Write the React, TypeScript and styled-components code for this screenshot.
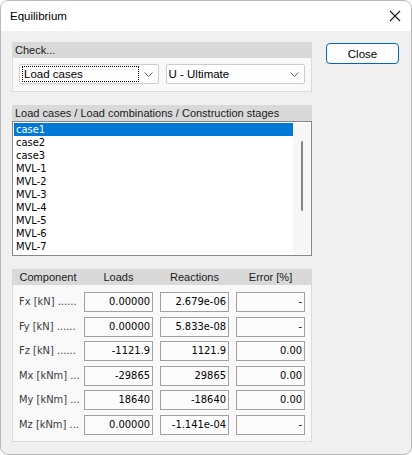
import React from "react";
import styled, {createGlobalStyle} from "styled-components";

const GlobalStyle = createGlobalStyle`
  html, body {
    margin: 0;
    padding: 0;
    background: #ffffff;
  }
  * {
    box-sizing: border-box;
  }
`;

const components = [
    {label: "Fx [kN] ......", loads: "0.00000", reactions: "2.679e-06", error: "-"},
    {label: "Fy [kN] ......", loads: "0.00000", reactions: "5.833e-08", error: "-"},
    {label: "Fz [kN] ......", loads: "-1121.9", reactions: "1121.9", error: "0.00"},
    {label: "Mx [kNm] ...", loads: "-29865", reactions: "29865", error: "0.00"},
    {label: "My [kNm] ...", loads: "18640", reactions: "-18640", error: "0.00"},
    {label: "Mz [kNm] ...", loads: "0.00000", reactions: "-1.141e-04", error: "-"},
];

const loadCases = ["case1", "case2", "case3", "MVL-1", "MVL-2", "MVL-3", "MVL-4", "MVL-5", "MVL-6", "MVL-7"];

const Chevron = () => (
    <svg width="9" height="5" viewBox="0 0 9 5">
        <path d="M0.5 0.5 L4.5 4.5 L8.5 0.5" fill="none" stroke="#606060" strokeWidth="1" />
    </svg>
);

const App = () => {
    return (
        <>
            <GlobalStyle />
            <Window>
                <TitleBar>
                    <Title>Equilibrium</Title>
                    <svg width="12" height="12" viewBox="0 0 12 12">
                        <path d="M1 1 L11 11 M11 1 L1 11" stroke="#1a1a1a" strokeWidth="1.1" />
                    </svg>
                </TitleBar>
                <Body>
                    <LeftColumn>
                        <Group>
                            <GroupHeader>Check...</GroupHeader>
                            <GroupContent padding="6px 6px 7px">
                                <ComboRow>
                                    <Combo>
                                        <FocusText>Load cases</FocusText>
                                        <Chevron />
                                    </Combo>
                                    <Combo>
                                        <ComboText>U - Ultimate</ComboText>
                                        <Chevron />
                                    </Combo>
                                </ComboRow>
                            </GroupContent>
                        </Group>

                        <Group>
                            <GroupHeader>Load cases / Load combinations / Construction stages</GroupHeader>
                            <ListBox>
                                <ListItems>
                                    {loadCases.map((item, i) => (
                                        <ListItem key={item} selected={i === 0}>{item}</ListItem>
                                    ))}
                                </ListItems>
                                <ScrollTrack>
                                    <ScrollThumb />
                                </ScrollTrack>
                            </ListBox>
                        </Group>

                        <Group>
                            <TableHeader>
                                <HeaderCell>Component</HeaderCell>
                                <HeaderCell>Loads</HeaderCell>
                                <HeaderCell>Reactions</HeaderCell>
                                <HeaderCell>Error [%]</HeaderCell>
                            </TableHeader>
                            <GroupContent padding="7px 6px 6px">
                                <TableGrid>
                                    {components.map((c) => (
                                        <React.Fragment key={c.label}>
                                            <RowLabel>{c.label}</RowLabel>
                                            <ValueBox>{c.loads}</ValueBox>
                                            <ValueBox>{c.reactions}</ValueBox>
                                            <ValueBox>{c.error}</ValueBox>
                                        </React.Fragment>
                                    ))}
                                </TableGrid>
                            </GroupContent>
                        </Group>
                    </LeftColumn>
                    <RightColumn>
                        <Button>Close</Button>
                    </RightColumn>
                </Body>
            </Window>
        </>
    );
};

export default App;

const uiFont = `"Liberation Sans", Arial, sans-serif`;
const dataFont = `"DejaVu Sans Condensed", "DejaVu Sans", sans-serif`;

const Window = styled.div`
  width: 412px;
  height: 455px;
  border: 1px solid #b9b9b9;
  border-radius: 8px;
  overflow: hidden;
  background: #f0f0f0;
  display: flex;
  flex-direction: column;
`;

const TitleBar = styled.div`
  height: 30px;
  flex: none;
  background: #ffffff;
  display: flex;
  align-items: center;
  justify-content: space-between;
  padding: 0 10px 0 9px;
`;

const Title = styled.div`
  font-family: ${uiFont};
  font-size: 11.5px;
  color: #000;
`;

const Body = styled.div`
  display: flex;
  padding: 11px 12px 0 11px;
  gap: 14px;
`;

const LeftColumn = styled.div`
  width: 300px;
  display: flex;
  flex-direction: column;
  gap: 13px;
`;

const RightColumn = styled.div`
  padding-top: 1px;
`;

const Group = styled.div`
  display: flex;
  flex-direction: column;
`;

const GroupHeader = styled.div`
  height: 16px;
  background: #d9d9d9;
  padding-left: 3px;
  font-family: ${uiFont};
  font-size: 11px;
  line-height: 16px;
  color: #1a1a1a;
  white-space: nowrap;
`;

const GroupContent = styled.div<{padding: string}>`
  background: #f9f9f9;
  border: 1px solid #dcdcdc;
  border-top: none;
  padding: ${(p) => p.padding};
`;

const ComboRow = styled.div`
  display: flex;
  gap: 7px;
`;

const Combo = styled.div`
  width: 140px;
  height: 20px;
  border: 1px solid #cccccc;
  border-radius: 2px;
  background: #fefefe;
  display: flex;
  align-items: center;
  justify-content: space-between;
  padding: 0 5px 0 2px;
`;

const ComboText = styled.span`
  font-family: ${uiFont};
  font-size: 11.5px;
  color: #000;
`;

const FocusText = styled(ComboText)`
  width: 117px;
  height: 16px;
  line-height: 14px;
  border: 1px dotted #000;
  padding-left: 1px;
`;

const ListBox = styled.div`
  height: 135px;
  border: 1px solid #828790;
  background: #ffffff;
  display: flex;
  padding: 1px;
`;

const ListItems = styled.div`
  flex: 1;
  display: flex;
  flex-direction: column;
`;

const ListItem = styled.div<{selected?: boolean}>`
  height: 13px;
  line-height: 13px;
  padding-left: 2px;
  font-family: ${dataFont};
  font-size: 11px;
  color: ${(p) => (p.selected ? "#ffffff" : "#000000")};
  background: ${(p) => (p.selected ? "#0078d7" : "transparent")};
`;

const ScrollTrack = styled.div`
  width: 17px;
  background: #f7f7f7;
  display: flex;
  justify-content: center;
  padding-top: 18px;
`;

const ScrollThumb = styled.div`
  width: 2px;
  height: 70px;
  border-radius: 1px;
  background: #858585;
`;

const TableHeader = styled.div`
  height: 16px;
  background: #d9d9d9;
  display: grid;
  grid-template-columns: 58px 69px 69px 69px;
  column-gap: 7px;
  padding: 0 7px;
`;

const HeaderCell = styled.div`
  text-align: center;
  font-family: ${uiFont};
  font-size: 11px;
  line-height: 16px;
  color: #1a1a1a;
  white-space: nowrap;
`;

const TableGrid = styled.div`
  display: grid;
  grid-template-columns: 58px 69px 69px 69px;
  column-gap: 7px;
  row-gap: 4.6px;
`;

const RowLabel = styled.div`
  margin-right: -5px;
  font-family: ${dataFont};
  font-size: 11px;
  line-height: 20px;
  color: #3a3a3a;
  white-space: nowrap;
`;

const ValueBox = styled.div`
  height: 20px;
  border: 1px solid #a0a0a0;
  background: #fcfcfc;
  text-align: right;
  padding-right: 2px;
  font-family: ${dataFont};
  font-size: 11px;
  line-height: 18px;
  color: #000;
`;

const Button = styled.button`
  width: 73px;
  height: 21px;
  border: 1px solid #0067c0;
  border-radius: 4px;
  background: #fdfdfd;
  font-family: ${uiFont};
  font-size: 11.5px;
  color: #000;
  padding: 0;
`;
